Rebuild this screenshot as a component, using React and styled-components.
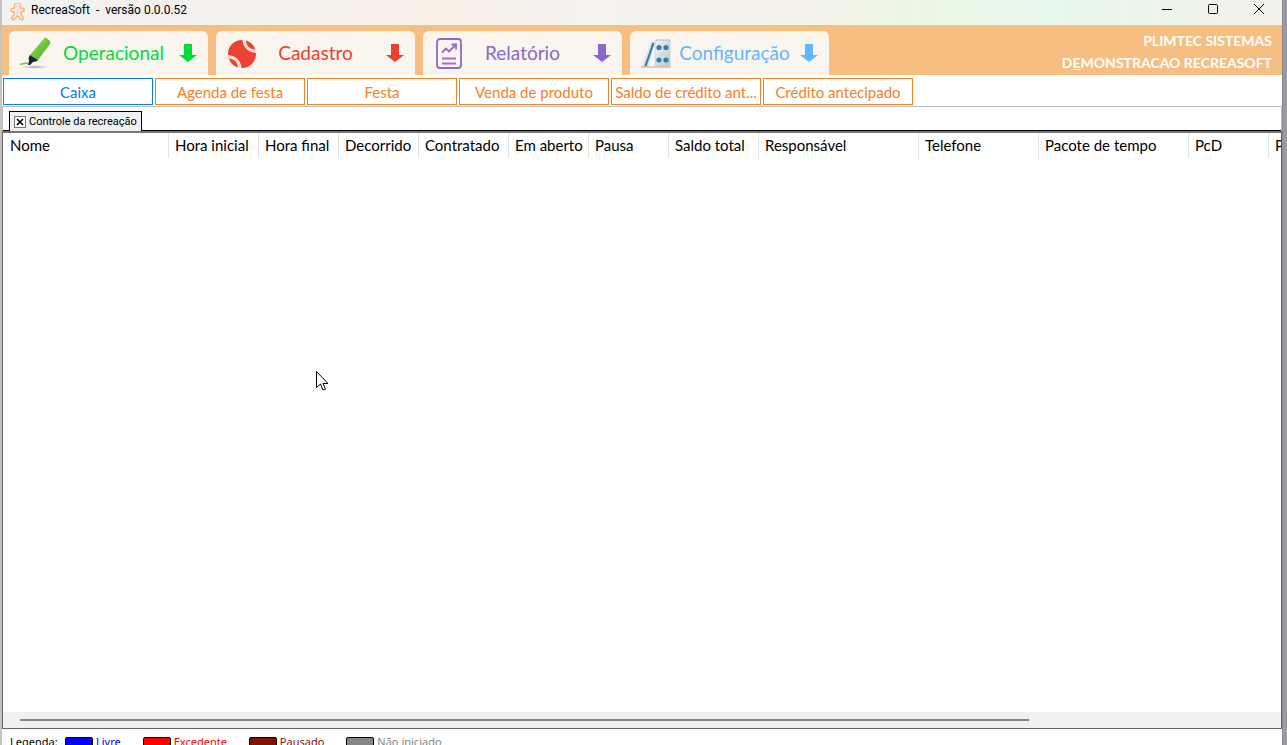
import React from "react";
import styled, { createGlobalStyle } from "styled-components";

const GlobalStyle = createGlobalStyle`
  * { box-sizing: border-box; }
  html, body { margin: 0; height: 100%; overflow: hidden; }
  #root { height: 100%; }
  body { font-family: Roboto, "Noto Sans", sans-serif; color: #000; }
  button { font-family: inherit; cursor: default; }
`;

const Desktop = styled.div`
  position: relative;
  height: 100vh;
  padding: 0 4px 0 2px;
  overflow: hidden;
  background: linear-gradient(90deg, #c4c4c4 50%, #9b99a5 50%);
`;

const Window = styled.main`
  display: flex;
  flex-direction: column;
  height: 100%;
  background: #fff;
  border-right: 1px solid #8a8a8a;
`;

const TitleBar = styled.header`
  display: flex;
  align-items: center;
  flex: none;
  height: 25px;
  padding: 0 8px;
  background: linear-gradient(90deg, #f3f1f1 0%, #f4f1ef 18%, #f9f1e8 35%, #f5f2f0 45%, #f5f2ea 62%, #eaf7e4 73%, #e6f7ee 83%, #eff3ea 93%, #f3f0ee 100%);
`;

const AppTitle = styled.h1`
  flex: 1;
  margin: 0 0 6px 6px;
  font-size: 12px;
  line-height: 16px;
  font-weight: 400;
  white-space: pre;
`;

const WindowButtons = styled.div`
  display: flex;
  height: 20px;
  margin-bottom: 7px;
`;

const WindowButton = styled.button`
  display: grid;
  place-items: center;
  width: 46px;
  padding: 0;
  border: 0;
  background: none;
  &:last-child { margin-right: -8px; }
`;

const Ribbon = styled.nav`
  display: flex;
  align-items: flex-end;
  gap: 8px;
  flex: none;
  height: 50px;
  padding: 0 10px 0 7px;
  background: #f7be81;
  font-family: Lato, sans-serif;
`;

const RibbonTab = styled.button`
  display: flex;
  align-items: center;
  width: 199px;
  height: 44px;
  padding: 0 11px 0 11px;
  border: 0;
  border-radius: 6px 6px 0 0;
  background: #faf5ef;
  color: ${(p) => p.$color};
  font-size: 19px;
  line-height: 24px;
`;

const RibbonLabel = styled.span`
  flex: 1;
  padding-right: ${(p) => (p.$short ? 14 : 4)}px;
  text-align: center;
`;

const Company = styled.div`
  flex: 1;
  align-self: flex-end;
  padding-bottom: 1px;
  font: bold 14px/22px Lato, sans-serif;
  text-align: right;
  color: #fff;
`;

const ActionBar = styled.div`
  display: flex;
  gap: 2px;
  flex: none;
  padding: 3px 1px 1px;
  border-bottom: 1px solid #bdbdbd;
`;

const ActionButton = styled.button`
  width: 150px;
  height: 27px;
  padding: 0;
  border: 1px solid ${(p) => (p.$active ? "#0a7bf2" : "#f58025")};
  background: #fff;
  color: ${(p) => (p.$active ? "#0a7bf2" : "#f58025")};
  font: 15px/20px Lato, sans-serif;
  white-space: nowrap;
`;

const PageTabs = styled.div`
  display: flex;
  align-items: flex-end;
  flex: none;
  height: 24px;
  padding-left: 6px;
  border: solid #bdbdbd;
  border-width: 0 1px 0 1px;
  box-shadow: inset 0 -1px #000;
`;

const PageTab = styled.div`
  display: flex;
  align-items: center;
  gap: 3px;
  height: 20px;
  padding: 0 4px;
  border: 1px solid #000;
  border-bottom: 0;
  background: #f0f0f0;
  font-size: 11px;
  line-height: 16px;
  white-space: nowrap;
`;

const CloseTab = styled.button`
  display: grid;
  place-items: center;
  width: 12px;
  height: 12px;
  padding: 0;
  border: 1px solid #777;
  background: #fff;
`;

const Grid = styled.section`
  display: flex;
  flex-direction: column;
  flex: 1;
  min-height: 0;
  border: 1px solid #646464;
  border-top: 2px solid #777;
`;

const GridBody = styled.div`
  flex: 1;
  min-height: 0;
  overflow: hidden;
`;

const Table = styled.table`
  width: 1366px;
  table-layout: fixed;
  border-collapse: separate;
  border-spacing: 0;
`;

const HeaderCell = styled.th`
  width: ${(p) => p.$width}px;
  height: 25px;
  padding: 0 0 2px 6px;
  border-right: 1px solid #e2e2e2;
  font: 15px/20px Lato, sans-serif;
  text-align: left;
  white-space: nowrap;
  &:first-child { padding-left: 7px; }
`;

const ScrollTrack = styled.div`
  display: flex;
  align-items: center;
  flex: none;
  height: 16px;
  padding-left: 17px;
  background: #f0f0f0;
`;

const ScrollThumb = styled.div`
  width: 80%;
  height: 2px;
  background: #868686;
`;

const Legend = styled.footer`
  display: flex;
  align-items: flex-start;
  flex: none;
  height: 16px;
  padding: 5px 8px 0;
  font: 11px/16px "Noto Sans", sans-serif;
`;

const LegendTitle = styled.span`
  width: 55px;
`;

const LegendItem = styled.span`
  display: flex;
  gap: 3px;
  margin-right: 22px;
  color: ${(p) => p.$color};
`;

const Swatch = styled.i`
  width: 28px;
  height: 14px;
  margin-top: 3px;
  border: 1px solid #000;
  border-radius: 2px;
  background: ${(p) => p.$color};
`;

const Pointer = styled.svg`
  position: absolute;
  left: 316px;
  top: 371px;
`;

const Gingerbread = () => (
  <svg width="15" height="20" viewBox="0 0 15 20" fill="none" stroke="#f6b77a" strokeWidth="1.4" strokeLinejoin="round">
    <path d="M5 5C3.500 2 5 0 7.500 0S11.500 2 10 5l3 .5c2 .5 1.500 3 0 3L10.500 9l.5 2.500 2 3c.8 2-1.500 3-2.600 1.500L7.500 12.500 4.600 16C3.500 17.500 1.200 16.500 2 14.500l2-3L4.500 9 2 8.500c-1.500 0-2-2.500 0-3z" />
    <path d="M6 3.500h.5M8.500 3.500H9M7.500 6.500v.7M7.500 9.500v.7" stroke="#ee7f72" />
  </svg>
);

const Highlighter = () => (
  <svg width="32" height="32" viewBox="0 0 32 32">
    <defs>
      <linearGradient id="marker" x1="0" x2="1" y1="0" y2="1">
        <stop offset="0" stopColor="#9be052" />
        <stop offset=".5" stopColor="#6fc63a" />
        <stop offset="1" stopColor="#4a9f27" />
      </linearGradient>
      <radialGradient id="shade">
        <stop offset="0" stopColor="#999" />
        <stop offset="1" stopColor="#ccc" stopOpacity="0" />
      </radialGradient>
    </defs>
    <ellipse cx="15" cy="30" rx="15" ry="2" fill="url(#shade)" />
    <path d="M24.500 1q1-1 2 0l3.500 3q1 1 0 3L18 23l-8-5z" fill="url(#marker)" />
    <path d="M10 18l8 5-2 1.500-3 .5-3 3H8l1-4-.5-3z" fill="#1c2634" />
    <path d="M0 27.500q6-2 8-1" stroke="#62d12c" strokeWidth="1.500" fill="none" />
  </svg>
);

const Ball = () => (
  <svg width="32" height="32" viewBox="0 0 32 32">
    <circle cx="15" cy="17" r="14" fill="#ec4130" />
    <g fill="none">
      <path d="M17 2.500C17.500 9.500 22 14 29.500 14.500M.5 19.500C8 20 12.500 24.500 13 31.500" stroke="#faf5ef" strokeWidth="3.200" />
      <path d="M17 2.500C17.500 9.500 22 14 29.500 14.500M.5 19.500C8 20 12.500 24.500 13 31.500" stroke="#f3a79d" strokeWidth=".6" />
    </g>
  </svg>
);

const Report = () => (
  <svg width="32" height="32" viewBox="0 0 32 32" fill="none" stroke="#9d66cd" strokeWidth="1.800">
    <rect x="3" y="2" width="24" height="29" rx="3" stroke="#8b69cf" />
    <path d="M8 15.500l4-4 3 3 7-7M17.500 7.500H22v5" />
    <path d="M8 21.500h14M8 26.500h14" strokeWidth="1.800" stroke="#ae66cb" />
  </svg>
);

const Domino = () => (
  <svg width="32" height="32" viewBox="0 0 32 32">
    <defs>
      <linearGradient id="tile" x2="1" y2="1">
        <stop offset="0" stopColor="#f3f5f7" />
        <stop offset="1" stopColor="#c0c6cb" />
      </linearGradient>
    </defs>
    <path d="M1 30L10 5h4L7 30z" fill="#d7dbde" />
    <path d="M4.500 29L12.500 6" stroke="#2380b2" strokeWidth="2" />
    <path d="M15 3h14v26H14V8z" fill="url(#tile)" stroke="#c6ccd1" strokeWidth=".7" />
    <path d="M15 3h14" stroke="#8ebed9" strokeDasharray="2 1" />
    <path d="M0 30h30" stroke="#aaa" />
    <g fill="#2684b6">
      <circle cx="18" cy="10.500" r="2.600" /><circle cx="25" cy="10.500" r="2.600" />
      <circle cx="18" cy="23" r="2.600" /><circle cx="25" cy="23" r="2.600" />
    </g>
  </svg>
);

const DownArrow = () => (
  <svg width="18" height="18" viewBox="0 0 18 18" fill="currentColor">
    <path d="M5 0h8v11h5l-9 7-9-7h5z" />
  </svg>
);

const ribbonTabs = [
  { label: "Operacional", color: "#00dc3c", Icon: Highlighter },
  { label: "Cadastro", color: "#ec4130", Icon: Ball, short: true },
  { label: "Relatório", color: "#8b67cf", Icon: Report, short: true },
  { label: "Configuração", color: "#61b7ff", Icon: Domino },
];

const actions = ["Caixa", "Agenda de festa", "Festa", "Venda de produto", "Saldo de crédito ant...", "Crédito antecipado"];

const columns = [
  ["Nome", 166], ["Hora inicial", 90], ["Hora final", 80], ["Decorrido", 80],
  ["Contratado", 90], ["Em aberto", 80], ["Pausa", 80], ["Saldo total", 90],
  ["Responsável", 160], ["Telefone", 120], ["Pacote de tempo", 150], ["PcD", 80], ["P", 100],
];

const legend = [["Livre", "#0000ff"], ["Excedente", "#ff0000"], ["Pausado", "#801000"], ["Não iniciado", "#868686"]];

export default function App() {
  return (
    <Desktop>
      <GlobalStyle />
      <Window>
        <TitleBar>
          <Gingerbread />
          <AppTitle>{"RecreaSoft  -  versão 0.0.0.52"}</AppTitle>
          <WindowButtons>
            <WindowButton aria-label="Minimizar">
              <svg width="12" height="12" stroke="#000"><path d="M1 6.500h10" /></svg>
            </WindowButton>
            <WindowButton aria-label="Maximizar">
              <svg width="12" height="12" fill="none" stroke="#000"><rect x="1.500" y="1.500" width="9" height="9" rx="1" /></svg>
            </WindowButton>
            <WindowButton aria-label="Fechar">
              <svg width="12" height="12" stroke="#000"><path d="M1 1l10 10M11 1L1 11" /></svg>
            </WindowButton>
          </WindowButtons>
        </TitleBar>
        <Ribbon>
          {ribbonTabs.map(({ label, color, Icon, short }) => (
            <RibbonTab key={label} $color={color}>
              <Icon />
              <RibbonLabel $short={short}>{label}</RibbonLabel>
              <DownArrow />
            </RibbonTab>
          ))}
          <Company>
            <div>PLIMTEC SISTEMAS</div>
            <div>D<u>E</u>MONSTRACAO RECREASOFT</div>
          </Company>
        </Ribbon>
        <ActionBar>
          {actions.map((label, i) => (
            <ActionButton key={label} $active={i === 0}>{label}</ActionButton>
          ))}
        </ActionBar>
        <PageTabs>
          <PageTab>
            <CloseTab aria-label="Fechar aba">
              <svg width="8" height="8" stroke="#000" strokeWidth="1.600"><path d="M1 1l6 6M7 1L1 7" /></svg>
            </CloseTab>
            Controle da recreação
          </PageTab>
        </PageTabs>
        <Grid>
          <GridBody>
            <Table>
              <thead>
                <tr>
                  {columns.map(([name, width]) => (
                    <HeaderCell key={name} $width={width}>{name}</HeaderCell>
                  ))}
                </tr>
              </thead>
            </Table>
          </GridBody>
          <ScrollTrack><ScrollThumb /></ScrollTrack>
        </Grid>
        <Legend>
          <LegendTitle>Legenda:</LegendTitle>
          {legend.map(([label, color]) => (
            <LegendItem key={label} $color={color}><Swatch $color={color} />{label}</LegendItem>
          ))}
        </Legend>
      </Window>
      <Pointer width="12" height="20" viewBox="0 0 12 20">
        <path d="M.5.500v16l4-3.500 2.500 6 2.500-1-2.500-5.500h5z" fill="#fff" stroke="#000" />
      </Pointer>
    </Desktop>
  );
}
